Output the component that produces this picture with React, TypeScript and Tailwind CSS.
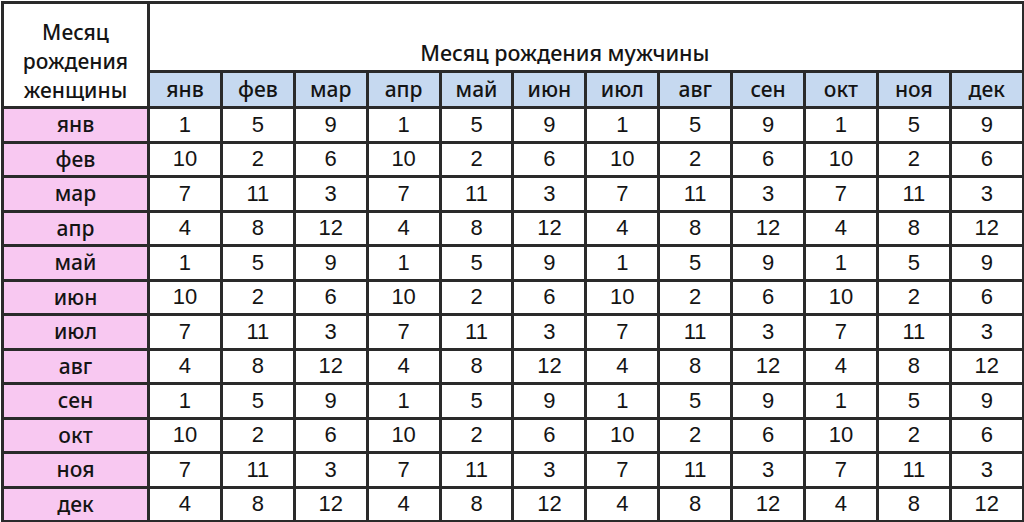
const months = ["янв", "фев", "мар", "апр", "май", "июн", "июл", "авг", "сен", "окт", "ноя", "дек"];

// each woman's row repeats a 3-value pattern across the 12 man's months
const patterns = [
  [1, 5, 9],
  [10, 2, 6],
  [7, 11, 3],
  [4, 8, 12],
];

const label = "font-['Noto_Sans','Open_Sans',sans-serif] text-[#141414] font-medium";

export default function App() {
  return (
    <div className="w-[1024px] h-[522px] bg-white pl-[1px] pt-[1px] overflow-hidden">
      <table className="table-fixed border-collapse w-[1021px] border-[3px] border-[#2a2a2a]">
        <colgroup>
          <col className="w-[146px]" />
          {months.map((m) => (
            <col key={m} className="w-[72.9px]" />
          ))}
        </colgroup>
        <thead>
          <tr className="h-[69px]">
            <th
              rowSpan={2}
              className={`${label} border-[3px] border-[#2a2a2a] bg-white text-[21px] leading-[29px] align-middle pt-[12px]`}
            >
              Месяц
              <br />
              рождения
              <br />
              женщины
            </th>
            <th
              colSpan={12}
              className={`${label} border-[3px] border-[#2a2a2a] bg-white text-[21.5px] align-bottom pb-[1px] pr-[42px]`}
            >
              Месяц рождения мужчины
            </th>
          </tr>
          <tr className="h-[36px]">
            {months.map((m) => (
              <th
                key={m}
                className={`${label} border-[3px] border-[#2a2a2a] bg-[#c6d9f0] text-[21px] leading-none`}
              >
                {m}
              </th>
            ))}
          </tr>
        </thead>
        <tbody>
          {months.map((m, i) => {
            const p = patterns[i % 4];
            return (
              <tr key={m} className="h-[34.5px]">
                <td
                  className={`${label} border-[3px] border-[#2a2a2a] bg-[#f8c8f1] text-[21px] text-center leading-none`}
                >
                  {m}
                </td>
                {months.map((_, j) => (
                  <td
                    key={j}
                    className="border-[3px] border-[#2a2a2a] bg-white text-center text-[22px] leading-none text-[#141414] font-['Liberation_Sans',Arial,sans-serif]"
                  >
                    {p[j % 3]}
                  </td>
                ))}
              </tr>
            );
          })}
        </tbody>
      </table>
    </div>
  );
}
